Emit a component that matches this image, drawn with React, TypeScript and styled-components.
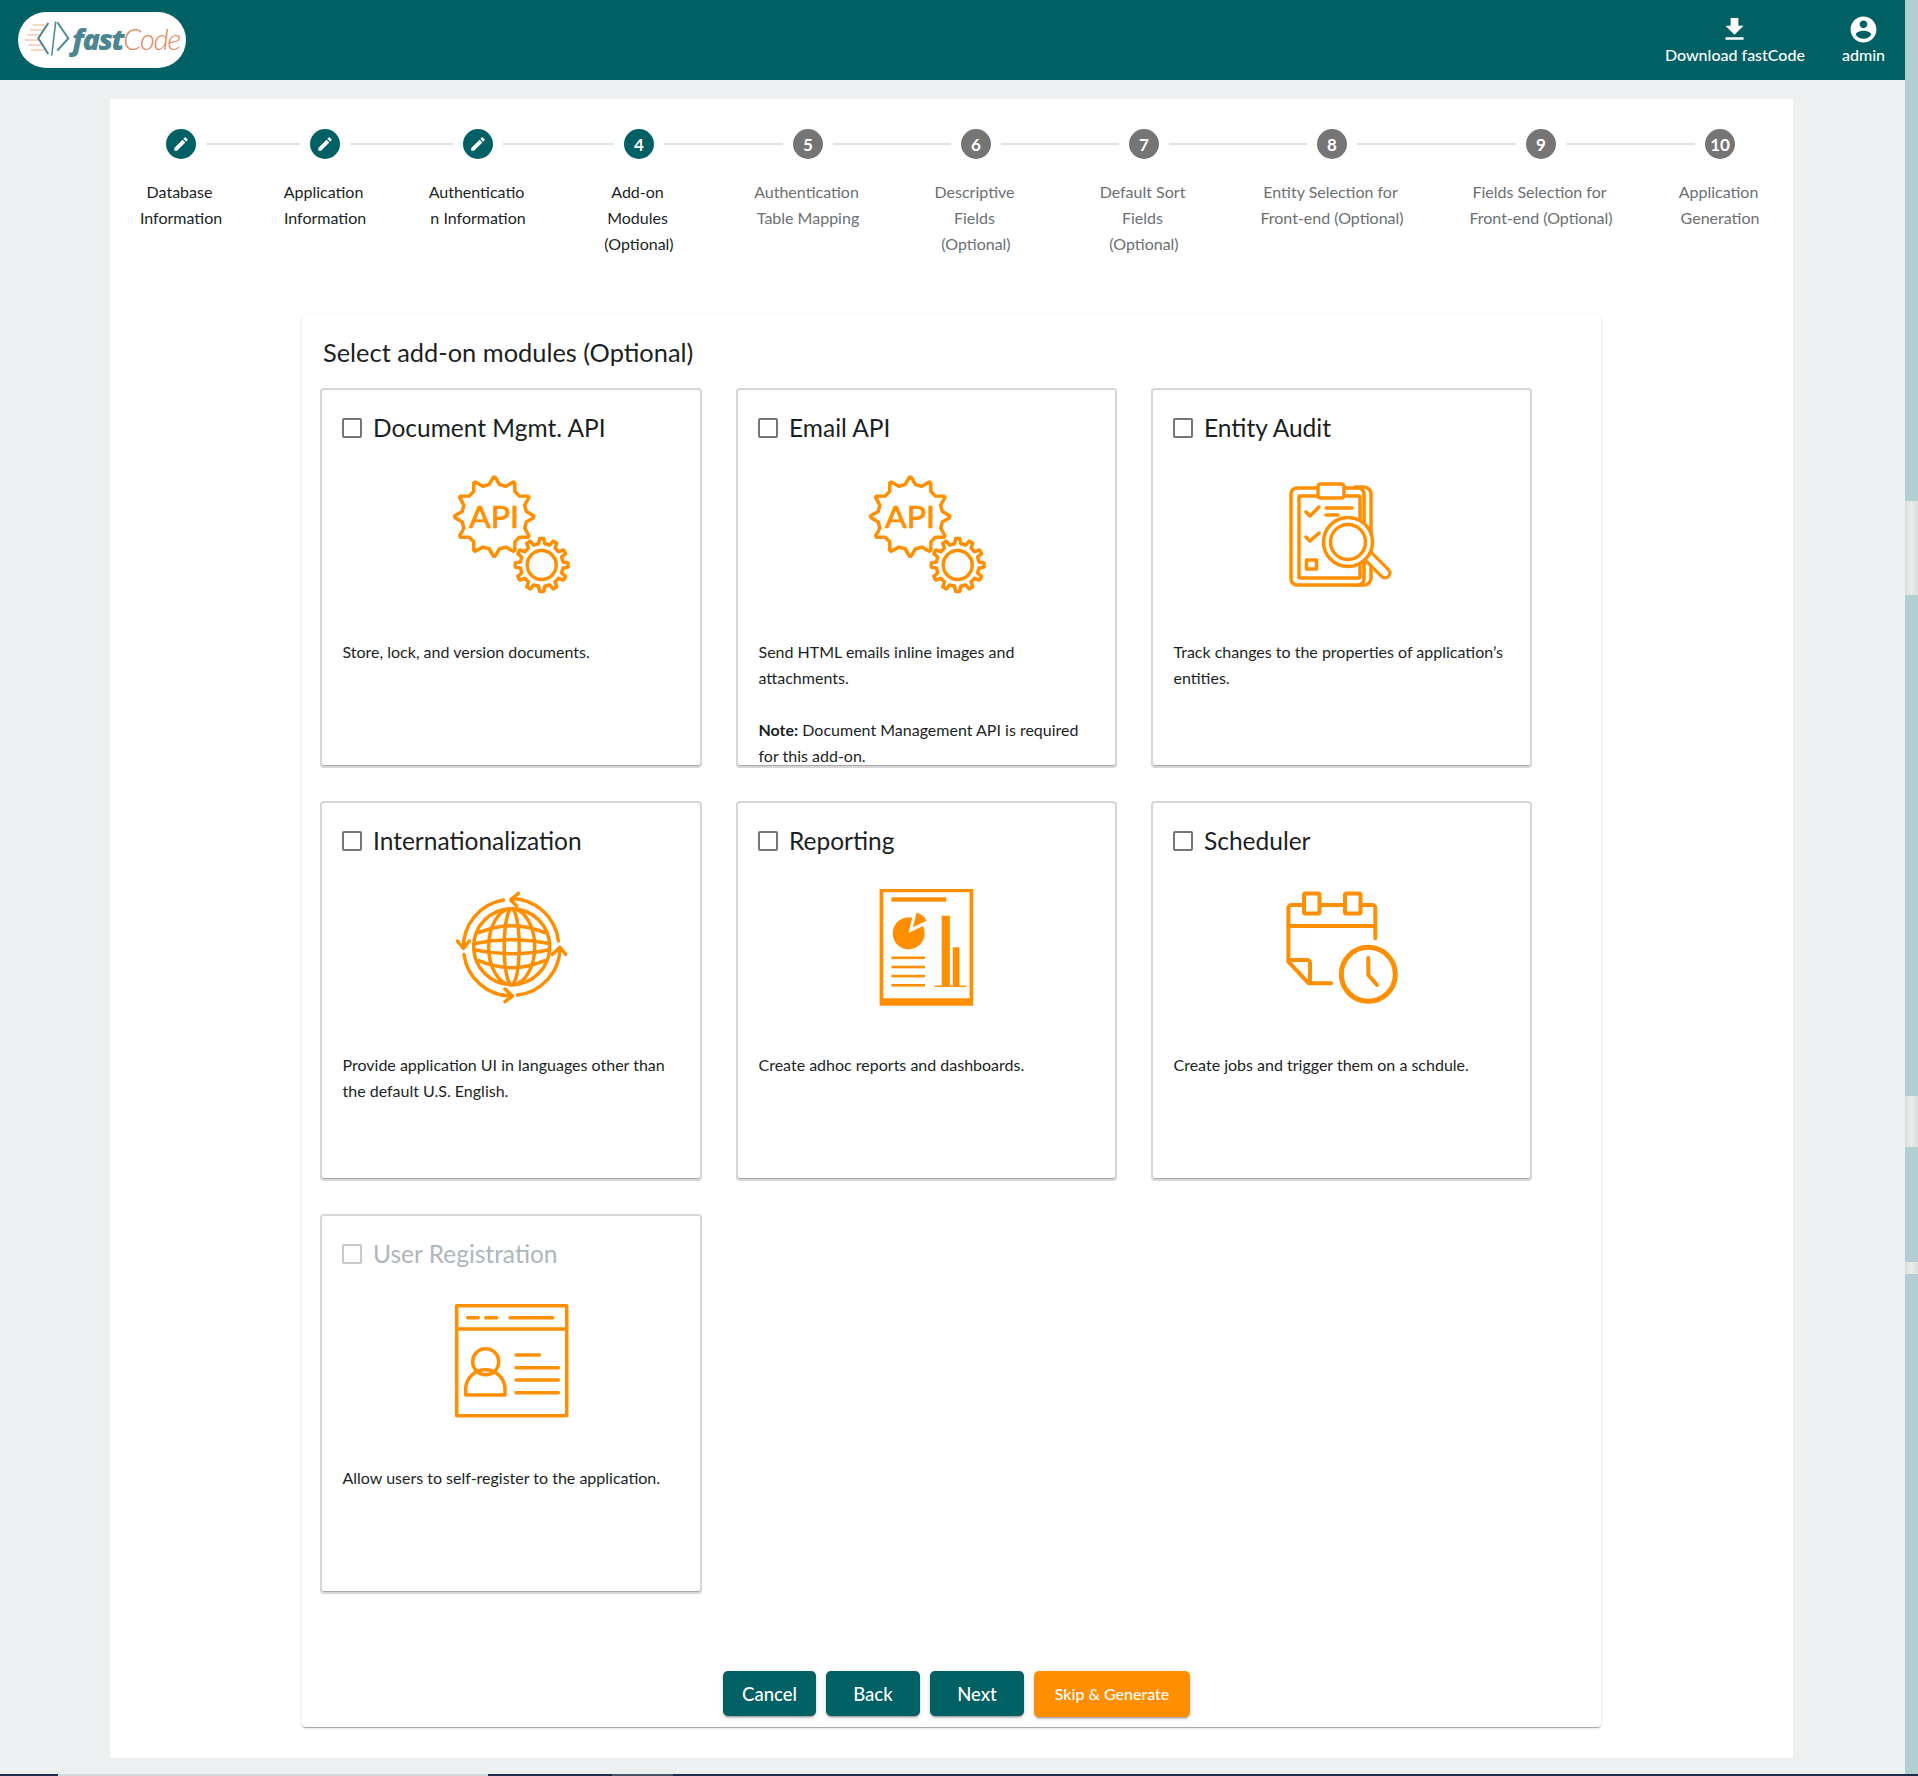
import React from "react";
import styled, { createGlobalStyle } from "styled-components";

const TEAL = "#006064";
const ORANGE = "#ff8f00";
const FONT = `"Lato", "Noto Sans", sans-serif`;

const Global = createGlobalStyle`
  html, body { margin: 0; padding: 0; background: #ecf0f1; overflow: hidden; }
  * { box-sizing: border-box; }
`;

const Page = styled.div`
  width: 1918px; height: 1776px; display: flex; flex-direction: column; overflow: hidden;
  font-family: ${FONT}; color: #1b1f23;
`;
const Body = styled.div`flex: 1; display: flex; min-height: 0;`;
const Main = styled.div`flex: 1; display: flex; flex-direction: column; min-width: 0;`;
const ScrollTrack = styled.div`width: 13px; background: #b3ced2; display: flex; flex-direction: column;`;
const ScrollThumb = styled.div<{ $gap: number; $h: number }>`
  margin-top: ${(p) => p.$gap}px; height: ${(p) => p.$h}px;
  background: linear-gradient(90deg, #dcdfdf, #ececec 50%, #dadddd);
`;
const BottomBar = styled.div`height: 2px; display: flex; background: #1f2c4d;`;
const BottomSeg = styled.div<{ $w: number; $c: string }>`width: ${(p) => p.$w}px; background: ${(p) => p.$c};`;

const Header = styled.header`
  height: 80px; background: ${TEAL}; display: flex; align-items: flex-start; justify-content: space-between;
  padding: 0 20px 0 18px; flex-shrink: 0;
`;
const LogoPill = styled.div`
  margin-top: 12px; width: 168px; height: 56px; border-radius: 28px; background: #fff;
  display: flex; align-items: center; padding: 0 0 3px 7px; white-space: nowrap;
  svg { flex-shrink: 0; }
`;
const LogoFast = styled.span`
  font-family: "Open Sans", sans-serif; font-style: italic; font-weight: 800; font-size: 29px; letter-spacing: -1.5px; color: #4c8791; margin-left: 1px;
`;
const LogoCode = styled.span`
  font-family: "Lato", sans-serif; font-style: italic; font-weight: 300; font-size: 29px; letter-spacing: -1.2px; color: #e8845a;
`;
const HeaderActions = styled.div`display: flex; gap: 37px;`;
const HeaderAction = styled.div`
  padding-top: 14px; display: flex; flex-direction: column; align-items: center; color: #fff;
  font-size: 16px; font-weight: 500; line-height: 20px;
`;

const Content = styled.main`flex: 1; padding: 19px 0 0 110px; min-height: 0;`;
const Panel = styled.section`width: 1683px; height: 1659px; background: #fff; display: flex; flex-direction: column;`;

const Stepper = styled.div`display: flex; padding: 30px 0 0 71px; height: 158px; flex-shrink: 0;`;
const Step = styled.div`width: 0; display: flex; flex-direction: column; align-items: center; flex-shrink: 0;`;
const StepCircle = styled.div<{ $active: boolean }>`
  width: 30px; height: 30px; flex-shrink: 0; border-radius: 50%; display: flex; align-items: center; justify-content: center;
  background: ${(p) => (p.$active ? TEAL : "#757575")}; color: #fff; font-size: 17px; font-weight: 700;
`;
const StepLabel = styled.div<{ $active: boolean }>`
  margin-top: 20px; white-space: nowrap; text-align: center; font-size: 16px; line-height: 26px;
  color: ${(p) => (p.$active ? "#1b1f23" : "#6b6f72")};
`;
const StepLine = styled.div`
  &:not(:last-child) { padding-right: 3px; }
`;
const Connector = styled.div<{ $w: number }>`
  width: ${(p) => p.$w}px; flex-shrink: 0; height: 2px; margin-top: 14px;
  &::after { content: ""; display: block; height: 2px; margin: 0 25px; background: #e2e2e2; }
`;

const MainCard = styled.div`
  margin: 57px 0 0 192px; width: 1299px; height: 1413px; background: #fff; border-radius: 4px;
  box-shadow: 0 2px 1px -1px rgba(0,0,0,.2), 0 1px 1px 0 rgba(0,0,0,.14), 0 1px 3px 0 rgba(0,0,0,.12);
  padding: 18px 0 0 18px; display: flex; flex-direction: column;
`;
const Title = styled.h2`
  margin: 0 0 16px 3px; font-size: 25.4px; line-height: 40px; font-weight: 400; color: #1b1f23;
`;
const Grid = styled.div`
  display: grid; grid-template-columns: 382px 381px 381px; grid-auto-rows: 380px; column-gap: 34px; row-gap: 33px;
  height: 1203px;
`;
const Card = styled.article`
  border: 2px solid #d6d6d6; border-radius: 4px; background: #fff; overflow: hidden; padding: 24px 0 0 20px;
  box-shadow: inset 0 -1px 0 #a8a8a8;
`;
const CardHead = styled.label`display: flex; align-items: center; height: 28px;`;
const Check = styled.span<{ $off?: boolean }>`
  width: 20px; height: 20px; flex-shrink: 0; border-radius: 2px;
  border: 2px solid ${(p) => (p.$off ? "#c9c9c9" : "#757575")};
`;
const CardName = styled.span<{ $off?: boolean }>`
  margin: 0 0 0 11px; font-size: 24.5px; line-height: 28px; color: ${(p) => (p.$off ? "#aeb6bd" : "#1b1f23")};
`;
const IconBox = styled.div`
  margin: 28px 0 0 -20px; display: flex; justify-content: center; height: 130px; stroke: ${ORANGE};
  svg { display: block; }
`;
const Desc = styled.div`margin: 39px 18px 0 0.5px; font-size: 16px; line-height: 26px; color: #1b1f23;`;
const NoteP = styled.p`margin: 26px 0 0;`;
const DescP = styled.p`margin: 0;`;
const NoteLabel = styled.b`font-weight: 700;`;

const Footer = styled.div`display: flex; justify-content: center; align-items: flex-start; gap: 10px; margin-top: 80px; padding-right: 8px;`;
const Button = styled.button<{ $w: number; $accent?: boolean }>`
  width: ${(p) => p.$w}px; height: ${(p) => (p.$accent ? 46 : 45)}px; border: 0; border-radius: 5px; color: #fff; padding: 0 0 ${(p) => (p.$accent ? 2 : 0)}px;
  background: ${(p) => (p.$accent ? ORANGE : TEAL)}; font-family: ${FONT}; font-weight: 500;
  font-size: ${(p) => (p.$accent ? 16 : 18.5)}px;
  box-shadow: 0 3px 1px -2px rgba(0,0,0,.2), 0 2px 2px 0 rgba(0,0,0,.14), 0 1px 5px 0 rgba(0,0,0,.12);
`;

const W = { fill: "none", strokeWidth: 3.5, strokeLinecap: "round" as const, strokeLinejoin: "round" as const };

function gear(cx: number, cy: number, rO: number, rI: number, n: number, top: number, base: number) {
  const step = (Math.PI * 2) / n;
  const pts: string[] = [];
  const pt = (r: number, a: number) => `${(cx + r * Math.cos(a)).toFixed(2)} ${(cy + r * Math.sin(a)).toFixed(2)}`;
  for (let i = 0; i < n; i++) {
    const a = -Math.PI / 2 + i * step;
    pts.push(pt(rI, a - (base * step) / 2), pt(rO, a - (top * step) / 2), pt(rO, a + (top * step) / 2), pt(rI, a + (base * step) / 2));
  }
  return `M${pts.join("L")}Z`;
}

const ApiText = styled.text`
  font-family: ${FONT}; font-size: 30px; font-weight: 400; fill: ${ORANGE}; stroke: ${ORANGE}; stroke-width: .7px;
`;

const ApiIcon = () => (
  <svg width="130" height="130" viewBox="0 0 130 130">
    <g {...W}>
      <path d={gear(48.3, 46.7, 39.5, 32.5, 12, 0.08, 0.62)} fill="#fff" />
      <path d={gear(95.7, 95, 26.5, 21.5, 12, 0.3, 0.55)} fill="#fff" />
      <circle cx="95.7" cy="95" r="14.5" strokeWidth="3.5" />
    </g>
    <ApiText x="48" y="58" textAnchor="middle" textLength="50" lengthAdjust="spacingAndGlyphs">API</ApiText>
  </svg>
);

const AuditIcon = () => (
  <svg width="130" height="130" viewBox="0 0 130 130">
    <g {...W} transform="translate(-7 0)">
      <path d="M85 17h9a7 7 0 0 1 7 7v84a7 7 0 0 1-7 7H85" />
      <rect x="21" y="18" width="73" height="97" rx="6" fill="#fff" />
      <rect x="29" y="26" width="61" height="82" rx="1" />
      <rect x="48" y="14" width="26" height="14" rx="2.5" fill="#fff" />
      <path d="M36 42l4 4 9-9M36 67l4 4 9-8M56 38h26M56 45h12" />
      <rect x="36.5" y="90" width="10" height="9" />
      <path d="M98 86l17 17" strokeWidth="13" />
      <path d="M98 86l17 17" strokeWidth="6.5" stroke="#fff" />
      <circle cx="78" cy="72" r="24.5" fill="#fff" />
      <circle cx="78" cy="72" r="17.5" />
    </g>
  </svg>
);

const GlobeIcon = () => (
  <svg width="130" height="130" viewBox="0 0 130 130">
    <g {...W} transform="translate(65.7 63.7)">
      <circle r="38" />
      <ellipse rx="7.5" ry="38" />
      <ellipse rx="23" ry="38" />
      <path d="M-33-14Q0-28 33-14M-38-3Q0-11 38-3M-38 3Q0 11 38 3M-33 14Q0 28 33 14" />
      <path d="M-8.3-46.7A48 48 0 0 0-48.3 1.7M-54.3-5.7L-48.3 1.7L-42.3-5.7" />
      <path d="M46.7-5.7A48 48 0 0 0 0-48.3M6.7-53.3L-1-46.7L5-40.7" />
      <path d="M5.7 48.3A48 48 0 0 0 48.3.7M40.7 7.7L48.3.7L54 7.7" />
      <path d="M-47.7 7.7A48 48 0 0 0 .7 49.3M-6.7 42.3L.7 49.3L-6.7 55" />
    </g>
  </svg>
);

const ReportIcon = () => (
  <svg width="130" height="130" viewBox="0 0 130 130" stroke="none" fill={ORANGE}>
    <path fillRule="evenodd" d="M17.6 6H111.2V122.7H17.6ZM21.3 9.3V115.3H107.5V9.3Z" />
    <rect x="29.4" y="14.3" width="54.8" height="4.4" />
    <path d="M46.5 50L50.2 34.7A16 16 0 1 0 60.9 43Z" />
    <path d="M50.9 44.3L54.6 29.7Q61 31 64.6 37.7Z" />
    <rect x="29.4" y="73.5" width="33.6" height="2.6" />
    <rect x="29.4" y="82.7" width="33.6" height="2.6" />
    <rect x="29.4" y="91.8" width="33.6" height="2.6" />
    <rect x="29.4" y="101" width="33.6" height="2.6" />
    <rect x="79.7" y="32.7" width="8.2" height="71" />
    <rect x="90.8" y="64.3" width="6.7" height="39.4" />
    <rect x="72.4" y="102.6" width="31.8" height="1.4" />
  </svg>
);

const ScheduleIcon = () => (
  <svg width="130" height="130" viewBox="0 0 130 130">
    <g {...W} strokeWidth="4">
      <path d="M98.3 55.3V25a3 3 0 0 0-3-3H14.4a3 3 0 0 0-3 3V78.7L31.7 100.3H54" />
      <path d="M11.4 43H98.3M11.4 77H30a3 3 0 0 1 3 3V100" />
      <rect x="27" y="10.5" width="15.5" height="20" rx="1.5" fill="#fff" />
      <rect x="68" y="10.5" width="15.5" height="20" rx="1.5" fill="#fff" />
      <circle cx="91.3" cy="91.3" r="27" strokeWidth="5" />
      <path d="M91.3 75V92L100 102" />
    </g>
  </svg>
);

const UserIcon = () => (
  <svg width="130" height="130" viewBox="0 0 130 130">
    <g {...W}>
      <rect x="10.7" y="9.7" width="110" height="110" />
      <path d="M10.7 33H120.7M21.7 21.7H32.3M39.7 21.7H50.7M64 21.7H106.7" />
      <circle cx="39.7" cy="65.7" r="13" />
      <path d="M19.7 99V92A19.7 19.7 0 0 1 59 92V99ZM70 59H93.3M70 71.7H112.3M70 84H112.3M70 96.7H112.3" />
    </g>
  </svg>
);

const LogoMark = () => (
  <svg width="46" height="36" viewBox="0 0 46 36">
    <g fill="none" stroke="#f6c9b0" strokeWidth="1.6">
      <path d="M8 4H20M5 9H17M2 14H14M0 19H13M3 24H17M6 29H20" />
    </g>
    <g fill="none" stroke="#4c8791" strokeWidth="2">
      <path d="M23.3 2L13.3 17.3L23.3 33" />
      <path d="M30.7 .7L26.7 34.7" strokeWidth="1.5" />
      <path d="M32.3 1.3L43.3 17.3L32.3 29.7" />
    </g>
  </svg>
);

const EditGlyph = () => (
  <svg width="18" height="18" viewBox="0 0 24 24" fill="#fff">
    <path d="M3 17.25V21h3.75L17.81 9.94l-3.75-3.75L3 17.25zM20.71 7.04c.39-.39.39-1.02 0-1.41l-2.34-2.34c-.39-.39-1.02-.39-1.41 0l-1.83 1.83 3.75 3.75 1.83-1.83z" />
  </svg>
);

const steps: { lines: string[]; gap: number; edit?: boolean; active: boolean }[] = [
  { lines: ["Database", "Information"], gap: 144, edit: true, active: true },
  { lines: ["Application", "Information"], gap: 153, edit: true, active: true },
  { lines: ["Authenticatio", "n Information"], gap: 161, edit: true, active: true },
  { lines: ["Add-on", "Modules", "(Optional)"], gap: 169, active: true },
  { lines: ["Authentication", "Table Mapping"], gap: 168, active: false },
  { lines: ["Descriptive", "Fields", "(Optional)"], gap: 168, active: false },
  { lines: ["Default Sort", "Fields", "(Optional)"], gap: 188, active: false },
  { lines: ["Entity Selection for", "Front-end (Optional)"], gap: 209, active: false },
  { lines: ["Fields Selection for", "Front-end (Optional)"], gap: 179, active: false },
  { lines: ["Application", "Generation"], gap: 0, active: false },
];

const modules: { name: string; icon: React.ReactNode; desc: string; note?: string; off?: boolean }[] = [
  { name: "Document Mgmt. API", icon: <ApiIcon />, desc: "Store, lock, and version documents." },
  { name: "Email API", icon: <ApiIcon />, desc: "Send HTML emails inline images and attachments.", note: "Document Management API is required for this add-on." },
  { name: "Entity Audit", icon: <AuditIcon />, desc: "Track changes to the properties of application’s entities." },
  { name: "Internationalization", icon: <GlobeIcon />, desc: "Provide application UI in languages other than the default U.S. English." },
  { name: "Reporting", icon: <ReportIcon />, desc: "Create adhoc reports and dashboards." },
  { name: "Scheduler", icon: <ScheduleIcon />, desc: "Create jobs and trigger them on a schdule." },
  { name: "User Registration", icon: <UserIcon />, desc: "Allow users to self-register to the application.", off: true },
];

export default function App() {
  return (
    <Page>
      <Global />
      <Body>
        <Main>
          <Header>
            <LogoPill>
              <LogoMark />
              <LogoFast>fast</LogoFast>
              <LogoCode>Code</LogoCode>
            </LogoPill>
            <HeaderActions>
              <HeaderAction>
                <svg width="31" height="31" viewBox="0 0 24 24" fill="#fff"><path d="M19 9h-4V3H9v6H5l7 7 7-7zM5 18v2h14v-2H5z" /></svg>
                Download fastCode
              </HeaderAction>
              <HeaderAction>
                <svg width="31" height="31" viewBox="0 0 24 24" fill="#fff"><path d="M12 2C6.48 2 2 6.48 2 12s4.48 10 10 10 10-4.48 10-10S17.52 2 12 2zm0 3c1.66 0 3 1.34 3 3s-1.34 3-3 3-3-1.34-3-3 1.34-3 3-3zm0 14.2c-2.5 0-4.71-1.28-6-3.22.03-1.99 4-3.08 6-3.08 1.99 0 5.97 1.09 6 3.08-1.29 1.94-3.5 3.22-6 3.22z" /></svg>
                admin
              </HeaderAction>
            </HeaderActions>
          </Header>
          <Content>
            <Panel>
              <Stepper>
                {steps.map((s, i) => (
                  <React.Fragment key={i}>
                    <Step>
                      <StepCircle $active={s.active}>{s.edit ? <EditGlyph /> : i + 1}</StepCircle>
                      <StepLabel $active={s.active}>
                        {s.lines.map((l, j) => (
                          <StepLine key={j}>{l}</StepLine>
                        ))}
                      </StepLabel>
                    </Step>
                    {s.gap > 0 && <Connector $w={s.gap} />}
                  </React.Fragment>
                ))}
              </Stepper>
              <MainCard>
                <Title>Select add-on modules (Optional)</Title>
                <Grid>
                  {modules.map((m) => (
                    <Card key={m.name}>
                      <CardHead>
                        <Check $off={m.off} />
                        <CardName $off={m.off}>{m.name}</CardName>
                      </CardHead>
                      <IconBox>{m.icon}</IconBox>
                      <Desc>
                        <DescP>{m.desc}</DescP>
                        {m.note && (
                          <NoteP>
                            <NoteLabel>Note:</NoteLabel> {m.note}
                          </NoteP>
                        )}
                      </Desc>
                    </Card>
                  ))}
                </Grid>
                <Footer>
                  <Button $w={93}>Cancel</Button>
                  <Button $w={94}>Back</Button>
                  <Button $w={94}>Next</Button>
                  <Button $w={156} $accent>Skip &amp; Generate</Button>
                </Footer>
              </MainCard>
            </Panel>
          </Content>
        </Main>
        <ScrollTrack>
          <ScrollThumb $gap={501} $h={94} />
          <ScrollThumb $gap={501} $h={51} />
          <ScrollThumb $gap={115} $h={12} />
        </ScrollTrack>
      </Body>
      <BottomBar>
        <BottomSeg $w={58} $c="#1f2c4d" />
        <BottomSeg $w={430} $c="#d5d8d8" />
        <BottomSeg $w={124} $c="#1f2c4d" />
        <BottomSeg $w={61} $c="#4a5268" />
      </BottomBar>
    </Page>
  );
}
